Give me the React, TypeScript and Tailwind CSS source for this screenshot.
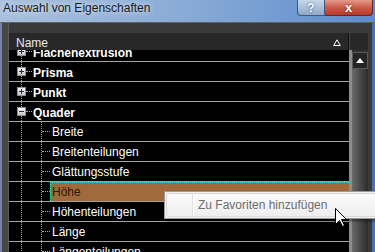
const dotV = "absolute top-0 bottom-0 border-l border-dotted border-[#a8a8a8]";

function ExpandBox({ open }: { open?: boolean }) {
  return (
    <svg width="9" height="9" viewBox="0 0 9 9" className="relative ml-[8px] shrink-0">
      <defs>
        <linearGradient id={open ? "gbo" : "gbc"} x1="0" y1="0" x2="0" y2="1">
          <stop offset="0" stopColor="#ffffff" />
          <stop offset="1" stopColor="#c4c4c4" />
        </linearGradient>
      </defs>
      <rect x="0.5" y="0.5" width="8" height="8" fill={`url(#${open ? "gbo" : "gbc"})`} stroke="#8c8c8c" />
      <rect x="2" y="4" width="5" height="1" fill="#1c2f5e" />
      {!open && <rect x="4" y="2" width="1" height="5" fill="#1c2f5e" />}
    </svg>
  );
}

function Parent({ label, open }: { label: string; open?: boolean }) {
  return (
    <div className="relative flex h-[20px] shrink-0 items-center border-b border-[#a3a3a3]">
      <span className={`${dotV} left-[12px]`} />
      <ExpandBox open={open} />
      <span className="w-[6px] border-t border-dotted border-[#a8a8a8]" />
      <span className="ml-[1px] pt-[2px] text-[12px] font-bold leading-none text-white">{label}</span>
    </div>
  );
}

function Child({ label, selected }: { label: string; selected?: boolean }) {
  return (
    <div className="relative flex h-[20px] shrink-0 items-stretch border-b border-[#a3a3a3]">
      <span className={`${dotV} left-[12px]`} />
      <span className={`${dotV} left-[32px]`} />
      <span className="ml-[33px] w-[8px] self-center border-t border-dotted border-[#a8a8a8]" />
      {selected ? (
        <span className="flex flex-1 items-center border-t border-l border-dotted border-[#3fd6cc] bg-[#a16a3a] pl-[1px] text-[12px] leading-none text-[#2a1808]">
          {label}
        </span>
      ) : (
        <span className="flex flex-1 items-center pl-[2px] text-[12px] leading-none text-white">{label}</span>
      )}
    </div>
  );
}

function TitleBar() {
  return (
    <div className="flex h-[22px] items-start justify-between bg-linear-to-r from-[#a9c0dc] via-[#88aad6] to-[#5f8ccc]">
      <span className="ml-[3px] mt-[1px] text-[12px] leading-[14px] text-[#1b1b1b] [text-shadow:0_0_6px_#ffffff]">
        Auswahl von Eigenschaften
      </span>
      <div className="mr-[2px] flex h-[16px]">
        <div className="flex w-[28px] items-center justify-center rounded-bl-[4px] border border-t-0 border-[#45577a] bg-linear-to-b from-[#c9d7e8] to-[#8ea8c9] text-[12px] font-bold leading-none text-white [text-shadow:0_0_2px_#2a3b5c]">
          ?
        </div>
        <div className="flex w-[48px] items-center justify-center rounded-br-[4px] border border-t-0 border-l-0 border-[#5a2a24] bg-linear-to-b from-[#e39a8c] via-[#cc5a48] to-[#b8382a] text-[13px] font-bold leading-none text-white [text-shadow:0_0_2px_#5a1a10]">
          x
        </div>
      </div>
    </div>
  );
}

function Cursor() {
  return (
    <svg width="13" height="20" viewBox="0 0 13 20" className="absolute left-[335px] top-[208px]">
      <path
        d="M0.5 0.5 L0.5 16.5 L4.5 12.5 L7.5 18.5 L9.5 17.5 L6.5 11.5 L11.5 11.5 Z"
        fill="#ffffff"
        stroke="#000000"
        strokeWidth="1"
        strokeLinejoin="miter"
      />
    </svg>
  );
}

export default function App() {
  return (
    <div className="relative h-[252px] w-[375px] overflow-hidden bg-[#3c3c3c] font-['Liberation_Sans',Arial,sans-serif]">
      <TitleBar />
      <div className="flex h-[230px] border-t border-[#626262]">
        <div className="w-[2px] bg-[#6e86aa]" />
        <div className="w-[6px] bg-[#464646]" />
        <div className="flex w-[360px] flex-col border-l border-[#5c5c5c] bg-[#393939]">
          <div className="h-[10px] shrink-0" />
          <div className="flex h-[17px] shrink-0 bg-[#282828]">
            <div className="flex flex-1 items-center justify-between pl-[7px] pr-[7px] pt-[2px]">
              <span className="text-[12px] leading-none text-[#e8e8e8]">Name</span>
              <svg width="8" height="7" viewBox="0 0 8 7">
                <path d="M4 0.8 L7.3 6.5 L0.7 6.5 Z" fill="none" stroke="#ffffff" strokeWidth="1" />
              </svg>
            </div>
            <div className="w-[1px] bg-[#0c0c0c]" />
            <div className="w-[1px] bg-[#4a4a4a]" />
            <div className="w-[18px]" />
          </div>
          <div className="flex min-h-0 flex-1">
            <div className="flex flex-1 flex-col overflow-hidden bg-black">
              <div className="-mt-[8px] flex flex-col">
                <Parent label="Flächenextrusion" />
                <Parent label="Prisma" />
                <Parent label="Punkt" />
                <Parent label="Quader" open />
                <Child label="Breite" />
                <Child label="Breitenteilungen" />
                <Child label="Glättungsstufe" />
                <Child label="Höhe" selected />
                <Child label="Höhenteilungen" />
                <Child label="Länge" />
                <Child label="Längenteilungen" />
              </div>
            </div>
            <div className="w-[3px] bg-[#8d8d8d]" />
            <div className="flex w-[16px] flex-col bg-linear-to-r from-[#6a6a6a] to-[#2c2c2c]">
              <div className="h-[2px] bg-[#303030]" />
              <div className="flex h-[17px] items-center justify-center border border-[#5a5a5a] bg-[#252525]">
                <svg width="8" height="5" viewBox="0 0 8 5">
                  <path d="M4 0 L8 5 L0 5 Z" fill="#ffffff" />
                </svg>
              </div>
            </div>
          </div>
        </div>
        <div className="w-[4px] bg-[#3a3a3a]" />
        <div className="w-[3px] bg-[#4d6fab]" />
      </div>

      <div className="absolute left-[164px] top-[191px] flex h-[28px] w-[230px] border border-[#9a9a9a] bg-[#f0f0f0] p-[1px] shadow-[2px_2px_3px_rgba(0,0,0,0.45)]">
        <div className="flex flex-1 rounded-[3px] border border-[#dadada] bg-linear-to-b from-[#fbfbfb] to-[#eeeeee]">
          <div className="w-[25px]" />
          <div className="w-[1px] bg-[#e0e0e0]" />
          <div className="w-[1px] bg-white" />
          <span className="flex items-center pl-[4px] text-[12px] leading-none text-[#6d6d6d]">Zu Favoriten hinzufügen</span>
        </div>
      </div>
      <Cursor />
    </div>
  );
}
